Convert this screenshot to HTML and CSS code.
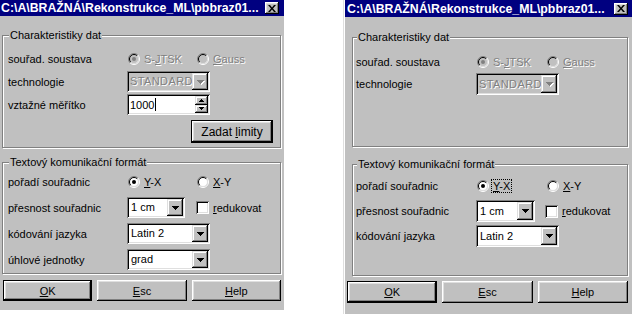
FILE: index.html
```html
<!DOCTYPE html>
<html lang="cs">
<head>
  <meta charset="UTF-8">
  <title>Nastavení formátu</title>
  <link rel="stylesheet" href="styles.css">
</head>
<body>
  <!-- full dialog -->
  <div class="dialog dialog-full">
    <div class="titlebar">
      <span class="title">C:\A\BRAŽNÁ\Rekonstrukce_ML\pbbraz01...</span>
      <span class="close-btn"><svg width="8" height="7" viewBox="0 0 8 7"><path d="M0 0h2l2 2.5L6 0h2L5 3.5 8 7H6L4 4.5 2 7H0l3-3.5z"/></svg></span>
    </div>
    <div class="dialog-body">
      <fieldset class="group group-data">
        <legend>Charakteristiky dat</legend>
        <div class="rows">
          <span class="label">souřad. soustava</span>
          <div class="options">
            <span class="option option-first disabled checked">
              <svg class="radio" width="12" height="12" viewBox="0 0 12 12"><circle class="face" cx="6" cy="6" r="4.5"/><path d="M2.1 9.9A5.5 5.5 0 0 1 9.9 2.1" stroke="#808080" fill="none"/><path d="M9.9 2.1A5.5 5.5 0 0 1 2.1 9.9" stroke="#fff" fill="none"/><path d="M2.8 9.2A4.5 4.5 0 0 1 9.2 2.8" stroke="#000" fill="none"/><path d="M9.2 2.8A4.5 4.5 0 0 1 2.8 9.2" stroke="#dfdfdf" fill="none"/><circle class="dot" cx="6" cy="6" r="2"/></svg>
              <span class="opt-text">S-<u>J</u>TSK</span>
            </span>
            <span class="option disabled">
              <svg class="radio" width="12" height="12" viewBox="0 0 12 12"><circle class="face" cx="6" cy="6" r="4.5"/><path d="M2.1 9.9A5.5 5.5 0 0 1 9.9 2.1" stroke="#808080" fill="none"/><path d="M9.9 2.1A5.5 5.5 0 0 1 2.1 9.9" stroke="#fff" fill="none"/><path d="M2.8 9.2A4.5 4.5 0 0 1 9.2 2.8" stroke="#000" fill="none"/><path d="M9.2 2.8A4.5 4.5 0 0 1 2.8 9.2" stroke="#dfdfdf" fill="none"/><circle class="dot" cx="6" cy="6" r="2"/></svg>
              <span class="opt-text"><u>G</u>auss</span>
            </span>
          </div>

          <span class="label">technologie</span>
          <div class="combo combo-wide disabled">
            <span class="combo-text">STANDARD</span>
            <span class="drop"><svg width="7" height="4" viewBox="0 0 7 4"><path d="M0 0h7v1H6v1H5v1H4v1H3V3H2V2H1V1H0z"/></svg></span>
          </div>

          <span class="label">vztažné měřítko</span>
          <div class="spin-edit">
            <span class="edit-text">1000<span class="caret"></span></span>
            <span class="spin">
              <span class="spin-btn"><svg width="5" height="3" viewBox="0 0 5 3"><path d="M2 0h1v1h1v1h1v1H0V2h1V1h1z"/></svg></span>
              <span class="spin-btn"><svg width="5" height="3" viewBox="0 0 5 3"><path d="M0 0h5v1H4v1H3v1H2V2H1V1H0z"/></svg></span>
            </span>
          </div>
        </div>
        <div class="group-actions">
          <button class="btn btn-default btn-limits"><span>Zadat <u>l</u>imity</span></button>
        </div>
      </fieldset>

      <fieldset class="group group-text">
        <legend>Textový komunikační formát</legend>
        <div class="rows rows-loose">
          <span class="label">pořadí souřadnic</span>
          <div class="options">
            <span class="option option-first checked">
              <svg class="radio" width="12" height="12" viewBox="0 0 12 12"><circle class="face" cx="6" cy="6" r="4.5"/><path d="M2.1 9.9A5.5 5.5 0 0 1 9.9 2.1" stroke="#808080" fill="none"/><path d="M9.9 2.1A5.5 5.5 0 0 1 2.1 9.9" stroke="#fff" fill="none"/><path d="M2.8 9.2A4.5 4.5 0 0 1 9.2 2.8" stroke="#000" fill="none"/><path d="M9.2 2.8A4.5 4.5 0 0 1 2.8 9.2" stroke="#dfdfdf" fill="none"/><circle class="dot" cx="6" cy="6" r="2"/></svg>
              <span class="opt-text"><u>Y</u>-X</span>
            </span>
            <span class="option">
              <svg class="radio" width="12" height="12" viewBox="0 0 12 12"><circle class="face" cx="6" cy="6" r="4.5"/><path d="M2.1 9.9A5.5 5.5 0 0 1 9.9 2.1" stroke="#808080" fill="none"/><path d="M9.9 2.1A5.5 5.5 0 0 1 2.1 9.9" stroke="#fff" fill="none"/><path d="M2.8 9.2A4.5 4.5 0 0 1 9.2 2.8" stroke="#000" fill="none"/><path d="M9.2 2.8A4.5 4.5 0 0 1 2.8 9.2" stroke="#dfdfdf" fill="none"/><circle class="dot" cx="6" cy="6" r="2"/></svg>
              <span class="opt-text"><u>X</u>-Y</span>
            </span>
          </div>

          <span class="label">přesnost souřadnic</span>
          <div class="combo-line">
            <div class="combo combo-short">
              <span class="combo-text">1 cm</span>
              <span class="drop"><svg width="7" height="4" viewBox="0 0 7 4"><path d="M0 0h7v1H6v1H5v1H4v1H3V3H2V2H1V1H0z"/></svg></span>
            </div>
            <span class="check"><span class="check-box"></span><span class="opt-text"><u>r</u>edukovat</span></span>
          </div>

          <span class="label">kódování jazyka</span>
          <div class="combo combo-wide">
            <span class="combo-text">Latin 2</span>
            <span class="drop"><svg width="7" height="4" viewBox="0 0 7 4"><path d="M0 0h7v1H6v1H5v1H4v1H3V3H2V2H1V1H0z"/></svg></span>
          </div>

          <span class="label">úhlové jednotky</span>
          <div class="combo combo-wide">
            <span class="combo-text">grad</span>
            <span class="drop"><svg width="7" height="4" viewBox="0 0 7 4"><path d="M0 0h7v1H6v1H5v1H4v1H3V3H2V2H1V1H0z"/></svg></span>
          </div>
        </div>
      </fieldset>

      <div class="buttons">
        <button class="btn btn-default"><span><u>O</u>K</span></button>
        <button class="btn"><span><u>E</u>sc</span></button>
        <button class="btn"><span><u>H</u>elp</span></button>
      </div>
    </div>
  </div>

  <!-- short dialog -->
  <div class="dialog dialog-short">
    <div class="titlebar">
      <span class="title">C:\A\BRAŽNÁ\Rekonstrukce_ML\pbbraz01...</span>
      <span class="close-btn"><svg width="8" height="7" viewBox="0 0 8 7"><path d="M0 0h2l2 2.5L6 0h2L5 3.5 8 7H6L4 4.5 2 7H0l3-3.5z"/></svg></span>
    </div>
    <div class="dialog-body">
      <fieldset class="group group-data">
        <legend>Charakteristiky dat</legend>
        <div class="rows">
          <span class="label">souřad. soustava</span>
          <div class="options">
            <span class="option option-first disabled checked">
              <svg class="radio" width="12" height="12" viewBox="0 0 12 12"><circle class="face" cx="6" cy="6" r="4.5"/><path d="M2.1 9.9A5.5 5.5 0 0 1 9.9 2.1" stroke="#808080" fill="none"/><path d="M9.9 2.1A5.5 5.5 0 0 1 2.1 9.9" stroke="#fff" fill="none"/><path d="M2.8 9.2A4.5 4.5 0 0 1 9.2 2.8" stroke="#000" fill="none"/><path d="M9.2 2.8A4.5 4.5 0 0 1 2.8 9.2" stroke="#dfdfdf" fill="none"/><circle class="dot" cx="6" cy="6" r="2"/></svg>
              <span class="opt-text">S-<u>J</u>TSK</span>
            </span>
            <span class="option disabled">
              <svg class="radio" width="12" height="12" viewBox="0 0 12 12"><circle class="face" cx="6" cy="6" r="4.5"/><path d="M2.1 9.9A5.5 5.5 0 0 1 9.9 2.1" stroke="#808080" fill="none"/><path d="M9.9 2.1A5.5 5.5 0 0 1 2.1 9.9" stroke="#fff" fill="none"/><path d="M2.8 9.2A4.5 4.5 0 0 1 9.2 2.8" stroke="#000" fill="none"/><path d="M9.2 2.8A4.5 4.5 0 0 1 2.8 9.2" stroke="#dfdfdf" fill="none"/><circle class="dot" cx="6" cy="6" r="2"/></svg>
              <span class="opt-text"><u>G</u>auss</span>
            </span>
          </div>

          <span class="label">technologie</span>
          <div class="combo combo-wide disabled">
            <span class="combo-text">STANDARD</span>
            <span class="drop"><svg width="7" height="4" viewBox="0 0 7 4"><path d="M0 0h7v1H6v1H5v1H4v1H3V3H2V2H1V1H0z"/></svg></span>
          </div>
        </div>
      </fieldset>

      <fieldset class="group group-text">
        <legend>Textový komunikační formát</legend>
        <div class="rows rows-loose">
          <span class="label">pořadí souřadnic</span>
          <div class="options">
            <span class="option option-first checked">
              <svg class="radio" width="12" height="12" viewBox="0 0 12 12"><circle class="face" cx="6" cy="6" r="4.5"/><path d="M2.1 9.9A5.5 5.5 0 0 1 9.9 2.1" stroke="#808080" fill="none"/><path d="M9.9 2.1A5.5 5.5 0 0 1 2.1 9.9" stroke="#fff" fill="none"/><path d="M2.8 9.2A4.5 4.5 0 0 1 9.2 2.8" stroke="#000" fill="none"/><path d="M9.2 2.8A4.5 4.5 0 0 1 2.8 9.2" stroke="#dfdfdf" fill="none"/><circle class="dot" cx="6" cy="6" r="2"/></svg>
              <span class="opt-text focus"><u>Y</u>-X</span>
            </span>
            <span class="option">
              <svg class="radio" width="12" height="12" viewBox="0 0 12 12"><circle class="face" cx="6" cy="6" r="4.5"/><path d="M2.1 9.9A5.5 5.5 0 0 1 9.9 2.1" stroke="#808080" fill="none"/><path d="M9.9 2.1A5.5 5.5 0 0 1 2.1 9.9" stroke="#fff" fill="none"/><path d="M2.8 9.2A4.5 4.5 0 0 1 9.2 2.8" stroke="#000" fill="none"/><path d="M9.2 2.8A4.5 4.5 0 0 1 2.8 9.2" stroke="#dfdfdf" fill="none"/><circle class="dot" cx="6" cy="6" r="2"/></svg>
              <span class="opt-text"><u>X</u>-Y</span>
            </span>
          </div>

          <span class="label">přesnost souřadnic</span>
          <div class="combo-line">
            <div class="combo combo-short">
              <span class="combo-text">1 cm</span>
              <span class="drop"><svg width="7" height="4" viewBox="0 0 7 4"><path d="M0 0h7v1H6v1H5v1H4v1H3V3H2V2H1V1H0z"/></svg></span>
            </div>
            <span class="check"><span class="check-box"></span><span class="opt-text"><u>r</u>edukovat</span></span>
          </div>

          <span class="label">kódování jazyka</span>
          <div class="combo combo-wide">
            <span class="combo-text">Latin 2</span>
            <span class="drop"><svg width="7" height="4" viewBox="0 0 7 4"><path d="M0 0h7v1H6v1H5v1H4v1H3V3H2V2H1V1H0z"/></svg></span>
          </div>
        </div>
      </fieldset>

      <div class="buttons">
        <button class="btn btn-default"><span><u>O</u>K</span></button>
        <button class="btn"><span><u>E</u>sc</span></button>
        <button class="btn"><span><u>H</u>elp</span></button>
      </div>
    </div>
  </div>
</body>
</html>
```

FILE: styles.css
```css
* {
  box-sizing: border-box;
}
body {
  margin: 0;
  background: #fff;
  display: flex;
  align-items: flex-start;
  font-family: 'Liberation Sans', Arial, sans-serif;
  font-size: 11px;
  color: #000;
}
.dialog {
  display: flex;
  flex-direction: column;
  background: #c0c0c0;
}
.dialog-full {
  width: 284px;
  height: 310px;
}
.dialog-short {
  width: 289px;
  height: 314px;
  margin-left: 59px;
  border-left: 1px solid #dfdfdf;
  padding-left: 1px;
  box-shadow: inset 1px 0 0 #fff;
}
.titlebar {
  display: flex;
  align-items: center;
  justify-content: space-between;
  height: 16px;
  padding: 0 5px 0 1px;
  background: #000080;
  color: #fff;
  font-size: 12.3px;
  font-weight: bold;
  white-space: nowrap;
}
.dialog-short .titlebar {
  height: 17px;
  padding: 0 4px 0 2px;
}
.close-btn {
  display: flex;
  align-items: center;
  justify-content: center;
  width: 14px;
  height: 12px;
  background: #c0c0c0;
  box-shadow: inset -1px -1px #000, inset 1px 1px #fff, inset -2px -2px #808080, inset 2px 2px #dfdfdf;
}
.close-btn svg {
  fill: #000;
}
.dialog-body {
  flex: 1;
  display: flex;
  flex-direction: column;
  padding: 13px 3px 0 2px;
}
.dialog-short .dialog-body {
  padding: 14px 4px 0 2px;
}

/* group boxes */
.group {
  margin: 0;
  min-width: 0;
  border: 1px solid #808080;
  box-shadow: 1px 1px 0 #fff, inset 1px 1px 0 #fff;
}
.group legend {
  margin-left: 1px;
  padding: 0 1px;
  line-height: 13px;
  background: #c0c0c0;
}
.dialog-full .group-data {
  padding: 6px 6px 4px 5px;
}
.dialog-full .group-text {
  margin-top: 8px;
  padding: 2px 6px 3px 5px;
}
.dialog-short .group {
  margin-left: 5px;
  padding-left: 3px;
}
.dialog-short .group-data {
  padding-top: 7px;
  padding-bottom: 51px;
}
.dialog-short .group-text {
  margin-top: 11px;
  padding-top: 4px;
  padding-bottom: 28px;
}
.rows {
  display: grid;
  grid-template-columns: 119px auto;
  grid-auto-rows: 21px;
  row-gap: 2px;
  align-items: center;
}
.rows-loose {
  row-gap: 5px;
}
.dialog-short .rows {
  grid-template-columns: 120px auto;
  grid-auto-rows: 22px;
  row-gap: 0;
}
.dialog-short .rows-loose {
  row-gap: 3px;
}
.label {
  white-space: nowrap;
}
.options {
  display: flex;
  align-items: center;
}
.option {
  display: flex;
  align-items: center;
  gap: 4px;
  padding-left: 1px;
}
.option-first {
  width: 69px;
}
.dialog-short .option-first {
  width: 70px;
}
.radio .face {
  fill: #fff;
}
.radio .dot {
  fill: none;
}
.checked .radio .dot {
  fill: #000;
}
.disabled .radio .face {
  fill: #c0c0c0;
}
.disabled.checked .radio .dot {
  fill: #808080;
}
.disabled .opt-text,
.combo.disabled .combo-text {
  color: #808080;
  text-shadow: 1px 1px 0 #fff;
}
.focus {
  outline: 1px dotted #000;
  padding: 0 1px;
  margin-left: -1px;
}

/* combo boxes */
.combo,
.spin-edit {
  display: flex;
  align-items: stretch;
  height: 21px;
  padding: 2px;
  background: #fff;
  border: none;
  box-shadow: inset 1px 1px #808080, inset -1px -1px #fff, inset 2px 2px #000, inset -2px -2px #dfdfdf;
}
.dialog-short .combo {
  height: 22px;
}
.combo-wide,
.spin-edit {
  width: 83px;
}
.combo-short {
  width: 58px;
}
.dialog-short .combo-short {
  width: 59px;
}
.combo.disabled {
  background: #c0c0c0;
}
.combo-text {
  flex: 1;
  overflow: hidden;
  white-space: nowrap;
  padding-left: 2px;
  line-height: 17px;
}
.dialog-short .combo-text {
  line-height: 18px;
}
.combo.disabled .combo-text {
  letter-spacing: 0.4px;
  padding-left: 1px;
}
.drop {
  display: flex;
  align-items: center;
  justify-content: center;
  width: 16px;
  background: #c0c0c0;
  box-shadow: inset -1px -1px #000, inset 1px 1px #dfdfdf, inset -2px -2px #808080, inset 2px 2px #fff;
}
.drop svg {
  fill: #000;
}
.combo.disabled .drop svg {
  fill: #808080;
  filter: drop-shadow(1px 1px 0 #fff);
}
.combo-line {
  display: flex;
  align-items: center;
}
.check {
  display: flex;
  align-items: center;
  gap: 4px;
  margin-left: 11px;
}
.dialog-short .check {
  margin-left: 10px;
}
.check-box {
  width: 13px;
  height: 13px;
  background: #fff;
  box-shadow: inset 1px 1px #808080, inset -1px -1px #fff, inset 2px 2px #000, inset -2px -2px #dfdfdf;
}

/* spin edit */
.edit-text {
  flex: 1;
  display: flex;
  align-items: center;
  padding-left: 1px;
}
.caret {
  width: 1px;
  height: 13px;
  margin-left: 1px;
  background: #000;
}
.spin {
  display: flex;
  flex-direction: column;
  width: 13px;
}
.spin-btn {
  flex: 1;
  display: flex;
  align-items: center;
  justify-content: center;
  background: #c0c0c0;
  box-shadow: inset -1px -1px #000, inset 1px 1px #dfdfdf, inset -2px -2px #808080, inset 2px 2px #fff;
}

/* buttons */
.group-actions {
  display: flex;
  justify-content: flex-end;
  margin-top: 5px;
  padding-right: 1px;
}
.btn {
  display: flex;
  align-items: center;
  justify-content: center;
  height: 21px;
  padding: 0;
  border: none;
  background: #c0c0c0;
  font: inherit;
  color: #000;
  box-shadow: inset -1px -1px #000, inset 1px 1px #fff, inset -2px -2px #808080, inset 2px 2px #dfdfdf;
}
.btn-default {
  box-shadow: inset 0 0 0 1px #000, inset -2px -2px #000, inset 2px 2px #fff, inset -3px -3px #808080, inset 3px 3px #dfdfdf;
}
.btn-limits {
  width: 82px;
  height: 23px;
  font-size: 12px;
}
.buttons {
  display: flex;
  gap: 5px;
  margin-top: 6px;
  padding-left: 1px;
}
.dialog-short .buttons {
  margin-top: 5px;
  padding-left: 0;
}
.buttons .btn {
  flex: 1;
}
.dialog-short .buttons .btn {
  height: 22px;
}
```
